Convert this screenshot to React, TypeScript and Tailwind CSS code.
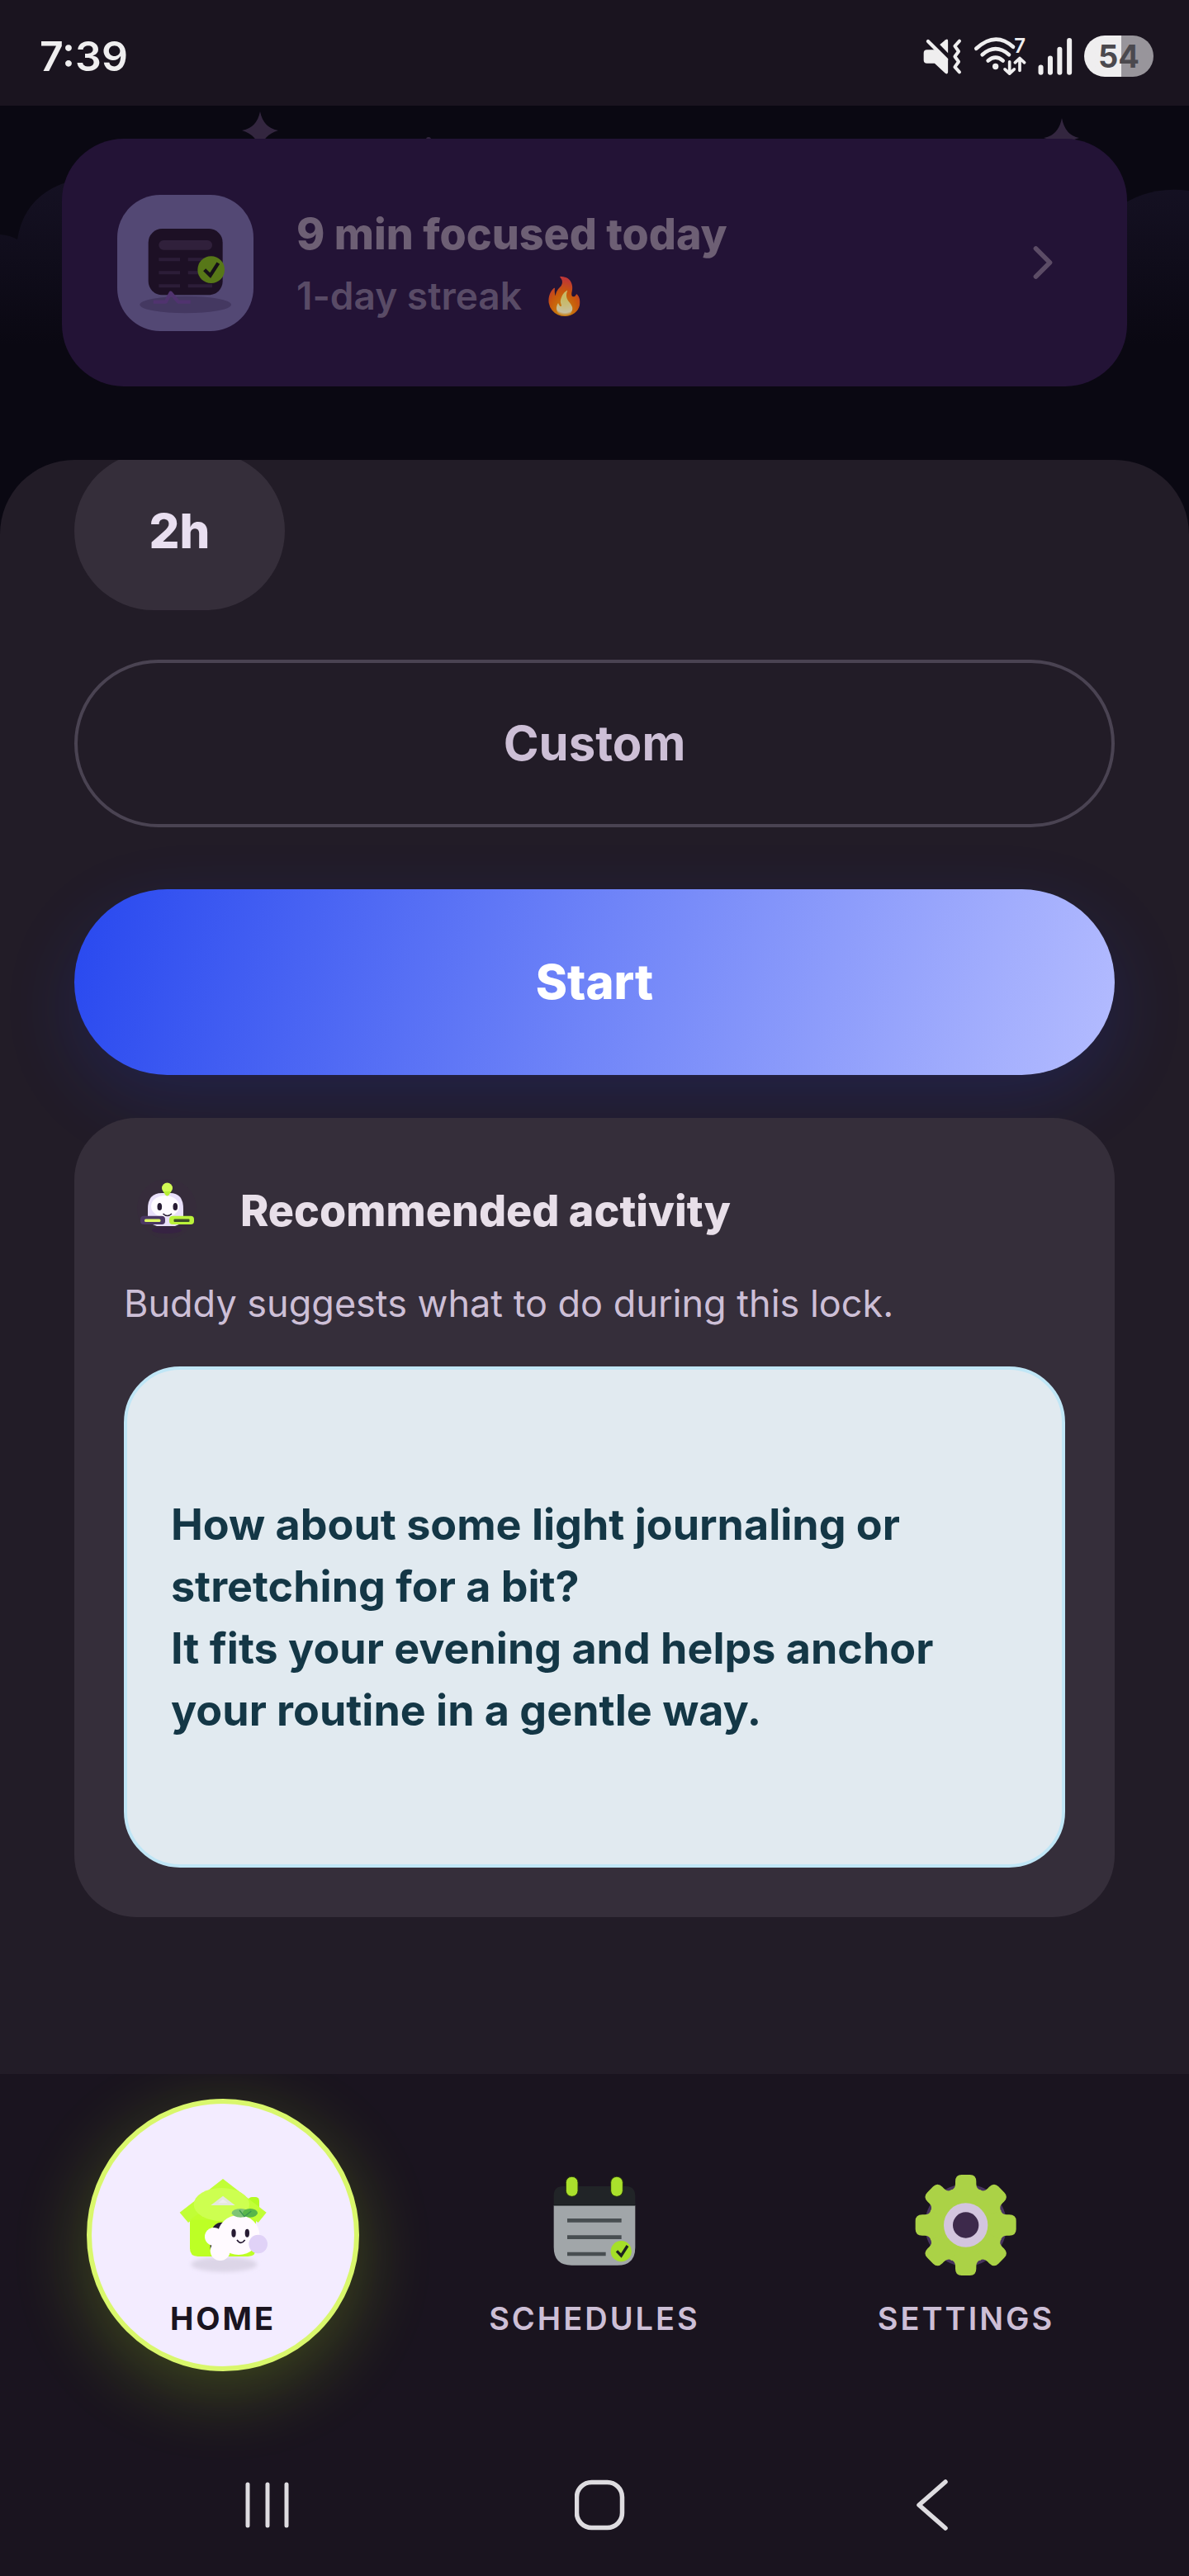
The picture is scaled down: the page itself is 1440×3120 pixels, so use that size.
import React from 'react';
import { ChevronRight } from 'lucide-react';

const MuteVibrateIcon = () => (
    <svg viewBox="28 45 142 140" className="w-[47px] h-[47px]" fill="#efeeef">
        <path d="M89 71 L110 54 Q119 48 119 58 V102 Z" />
        <path d="M42 90 H72 L119 124 V172 Q118 182 109 176 L70 140 H42 Q30 140 30 128 V102 Q30 90 42 90Z" />
        <path d="M46 59 L113 126" stroke="#efeeef" strokeWidth="13" strokeLinecap="round" />
        <path
            d="M161 58 L144 77 L158 96 L144 115 L158 134 L144 153 L161 172"
            fill="none"
            stroke="#efeeef"
            strokeWidth="12"
            strokeLinecap="round"
            strokeLinejoin="round"
        />
    </svg>
);

const WifiIcon = () => (
    <svg viewBox="208 45 192 140" className="w-16 h-[47px] overflow-visible" fill="none" stroke="#efeeef" strokeLinecap="round">
        <g strokeWidth="14">
            <path d="M218 86 Q288 22 352 80" />
            <path d="M240 108 Q288 66 337 108" />
            <path d="M261 130 Q288 107 315 130" />
        </g>
        <circle cx="288" cy="151" r="11" fill="#efeeef" stroke="none" />
        <text x="356" y="102" fill="#efeeef" stroke="#1a141f" strokeWidth="10" paintOrder="stroke" fontSize="72" fontWeight="600">7</text>
        <g strokeWidth="11" strokeLinejoin="round">
            <path d="M339 134 V175 M322 161 L339 177 L356 161" />
            <path d="M376 166 V123 M359 137 L376 121 L393 137" />
        </g>
    </svg>
);

const SignalIcon = () => (
    <svg viewBox="442 45 124 140" className="w-[42px] h-[47px]" stroke="#efeeef" strokeWidth="18" strokeLinecap="round">
        <path d="M452 154 V172 M486 121 V172 M520 89 V172 M555 57 V172" />
    </svg>
);

const ReportIcon = () => (
    <svg viewBox="67 47 495 495" className="size-[165px] shrink-0 rounded-[52px] bg-[#534874]">
        <ellipse cx="315" cy="446" rx="166" ry="31" fill="#443861" />
        <rect x="180" y="170" width="270" height="241" rx="50" fill="#1d1025" />
        <rect x="218" y="212" width="194" height="35" rx="17" fill="#30203b" />
        <path
            d="M218 282 H295 M324 282 H412 M218 330 H295 M324 330 H412 M218 378 H295 M324 378 H412"
            stroke="#2c1d38"
            strokeWidth="12"
        />
        <path d="M198 436 H243 L261 403 L289 436 H333" fill="none" stroke="#50336f" strokeWidth="13" strokeLinejoin="round" />
        <circle cx="408" cy="319" r="49" fill="#577718" />
        <path d="M384 319 L405 340 L434 295" fill="none" stroke="#161018" strokeWidth="13" />
    </svg>
);

const BuddyIcon = () => (
    <svg viewBox="0 0 105 105" className="size-[105px] shrink-0">
        <circle cx="52" cy="50" r="36" fill="#3a2840" opacity="0.35" />
        <ellipse cx="52" cy="76" rx="18" ry="4" fill="#362342" />
        <path d="M29 50 Q29 31 46 31 H56 Q72 31 72 50 V62 Q72 68 62 71 H40 Q29 68 29 60Z" fill="#e9e0fa" />
        <ellipse cx="50" cy="47" rx="17" ry="13" fill="#fefbff" />
        <circle cx="52.5" cy="25" r="6.5" fill="#d2fa55" />
        <path d="M48 29 Q52.5 40 57 29Z" fill="#b7ee35" />
        <ellipse cx="43.3" cy="47.5" rx="2.8" ry="4.6" fill="#271b33" />
        <ellipse cx="62.3" cy="47.5" rx="2.8" ry="4.6" fill="#271b33" />
        <path d="M47.5 56 Q52.5 61 58 56" fill="none" stroke="#271b33" strokeWidth="1.6" />
        <rect x="20" y="58.7" width="30" height="10.3" rx="4" fill="#4b3863" />
        <rect x="25" y="62.5" width="19.5" height="3.4" rx="1.5" fill="#dffa63" />
        <rect x="55" y="58.7" width="30" height="10.3" rx="4" fill="#baf23a" />
        <rect x="60.5" y="62.5" width="19" height="3.4" rx="1" fill="#3c4d2a" />
    </svg>
);

const HouseIcon = () => (
    <svg viewBox="390 426 360 372" className="w-[120px] h-[124px]">
        <defs>
            <filter id="soft" x="-20%" y="-50%" width="140%" height="200%">
                <feGaussianBlur stdDeviation="8" />
            </filter>
        </defs>
        <ellipse cx="574" cy="758" rx="120" ry="27" fill="#dcd5e7" filter="url(#soft)" />
        <rect x="662" y="513" width="40" height="70" rx="14" fill="#b4fb25" />
        <path d="M450 580 H690 V700 Q690 729 661 729 H479 Q450 729 450 700Z" fill="#bdff25" />
        <path d="M570 447 L728 569 L698 606 L570 510 L444 606 L413 569Z" fill="#c1fe36" />
        <path d="M450 596 L570 508 L690 596Z" fill="#c1fe2b" />
        <ellipse cx="565" cy="540" rx="101" ry="60" fill="#cdff50" />
        <path d="M570 509 L614 543 H526Z" fill="#e4e7dd" />
        <path d="M570 521 L588 535 H552Z" fill="#eeecee" />
        <circle cx="565" cy="640" r="35" fill="#271b33" />
        <rect x="524" y="650" width="76" height="75" rx="26" fill="#271b33" />
        <ellipse cx="627" cy="651" rx="76" ry="72" fill="#fffaff" />
        <circle cx="537" cy="657" r="33" fill="#fffaff" />
        <circle cx="560" cy="708" r="36" fill="#fffaff" />
        <circle cx="698" cy="684" r="34" fill="#e0d2f7" />
        <ellipse cx="634" cy="571" rx="32" ry="16" fill="#7fc475" />
        <ellipse cx="669" cy="571" rx="27" ry="16" fill="#58b74a" />
        <path d="M630 561 L648 584 L673 564" fill="none" stroke="#3a9450" strokeWidth="4" />
        <ellipse cx="609" cy="644" rx="8" ry="15" fill="#271b33" />
        <ellipse cx="658" cy="644" rx="8" ry="15" fill="#271b33" />
        <path d="M621 669 Q635 689 650 669" fill="none" stroke="#271b33" strokeWidth="5" />
    </svg>
);

const CalendarIcon = () => (
    <svg viewBox="300 126 360 372" className="w-[120px] h-[124px]">
        <path d="M332 243 V208 Q332 174 366 174 H594 Q628 174 628 208 V243Z" fill="#212427" />
        <path d="M332 243 H628 V396 Q628 461 563 461 H397 Q332 461 332 396Z" fill="#a1a6a9" />
        <path d="M332 243 H628" stroke="#111317" strokeWidth="3" />
        <rect x="376" y="139" width="44" height="72" rx="21" fill="#aae12c" stroke="#26340f" strokeWidth="3" />
        <rect x="539" y="139" width="44" height="72" rx="21" fill="#aae12c" stroke="#26340f" strokeWidth="3" />
        <path d="M381 298 H578 M381 359 H578 M381 420 H521" stroke="#484e51" strokeWidth="14" />
        <circle cx="577" cy="410" r="38" fill="#a5df28" />
        <path d="M561 409 L577 426 L600 390" fill="none" stroke="#1d2120" strokeWidth="10" />
    </svg>
);

const GEAR_TURNS = [0, 45, 90, 135, 180, 225, 270, 315];

const GearIcon = () => (
    <svg viewBox="210 126 360 372" className="w-[120px] h-[124px] overflow-visible">
        <g transform="translate(389 315)">
            <circle r="149" fill="#47345e" />
            <circle r="126" fill="#abd246" />
            {GEAR_TURNS.map(turn => (
                <path
                    key={turn}
                    transform={`rotate(${turn})`}
                    d="M0 0 L-55 -127 Q-38 -130 -38 -150 V-158 Q-38 -183 -15 -183 H15 Q38 -183 38 -158 V-150 Q38 -130 55 -127Z"
                    fill="#abd246"
                />
            ))}
            <circle r="80" fill="#d3c5de" />
            <circle r="47" fill="#3d294b" />
        </g>
    </svg>
);

// Night sky behind the streak card and the top corners of the sheet
const NightSky = () => (
    <svg viewBox="0 0 1440 520" preserveAspectRatio="none" className="absolute inset-x-0 top-0 w-full h-[520px]">
        <defs>
            <linearGradient id="cloud" x1="0" y1="90" x2="0" y2="290" gradientUnits="userSpaceOnUse">
                <stop offset="0" stopColor="#151123" />
                <stop offset="1" stopColor="#0a0812" />
            </linearGradient>
        </defs>
        <path d="M0 156 Q12 157 21 162 Q30 105 90 90 V290 H0Z" fill="url(#cloud)" />
        <path d="M1350 126 Q1390 96 1440 103 V290 H1350Z" fill="url(#cloud)" />
        <path d="M315 7 Q319 27 337 30 Q319 35 315 54 Q311 35 293 30 Q311 27 315 7Z" fill="#33263f" />
        <path d="M1286 15 Q1290 36 1307 39 Q1290 43 1286 60 Q1282 43 1264 39 Q1282 36 1286 15Z" fill="#33263f" />
        <circle cx="519" cy="41" r="3" fill="#33263f" />
    </svg>
);

const NAV_ITEMS = [
    { label: 'HOME', icon: HouseIcon, active: true },
    { label: 'SCHEDULES', icon: CalendarIcon, active: false },
    { label: 'SETTINGS', icon: GearIcon, active: false },
];

const StatusBar = () => (
    <header className="flex h-32 items-center justify-between bg-[#1a141f] pt-2 pl-12 pr-[43px]">
        <span className="text-[50px] leading-none font-semibold text-[#efeeef]">7:39</span>
        <div className="flex items-center gap-3.5">
            <MuteVibrateIcon />
            <WifiIcon />
            <SignalIcon />
            <span className="flex h-[50px] w-[84px] items-center justify-center rounded-full bg-linear-to-r from-[#efeeef] from-54% to-[#98959b] to-54% text-[38px] leading-none font-bold text-[#4b494e]">
                54
            </span>
        </div>
    </header>
);

const StreakCard = () => (
    <section className="relative px-[75px] pt-10 pb-[89px]">
        <NightSky />
        <button className="relative flex h-[300px] w-full items-center rounded-[75px] bg-[#231336] pl-[67px] pr-[68px] text-left">
            <ReportIcon />
            <span className="ml-[52px] flex flex-1 flex-col gap-1 pt-1">
                <span className="text-[52px] leading-[72px] font-extrabold text-[#6d5f74]">9 min focused today</span>
                <span className="flex items-center gap-6 text-[46px] leading-[68px] font-semibold text-[#594b66]">
                    1-day streak
                    <span className="text-[44px] opacity-75">🔥</span>
                </span>
            </span>
            <ChevronRight className="size-[68px] text-[#5c4c66]" strokeWidth={2} />
        </button>
    </section>
);

const Recommendation = () => (
    <section className="mt-[52px] rounded-[75px] bg-[#352e3a] p-[60px]">
        <div className="flex items-center gap-9">
            <BuddyIcon />
            <h2 className="text-[52px] leading-[72px] font-extrabold text-[#e8dfe9]">Recommended activity</h2>
        </div>
        <p className="mt-7 text-[45px] leading-[64px] text-[#cdbfd6]">Buddy suggests what to do during this lock.</p>
        <div className="mt-11 flex h-[607px] items-center rounded-[68px] border-4 border-[#c0e6f6] bg-[#e1eaf0] px-[53px]">
            <p className="text-[52px] leading-[75px] font-bold text-[#143746]">
                How about some light journaling or stretching for a bit?
                <br />
                It fits your evening and helps anchor your routine in a gentle way.
            </p>
        </div>
    </section>
);

const BottomNav = () => (
    <nav className="grid grid-cols-3 justify-items-center bg-[#1a141f] px-[45px] pt-[30px] pb-[76px]">
        {NAV_ITEMS.map(item => (
            <a
                key={item.label}
                href="#"
                className={`flex size-[330px] flex-col items-center gap-7 rounded-full border-[6px] pt-[84px] text-[38px] leading-[48px] tracking-[3px] ${item.active
                    ? 'border-[#d9f76c] bg-[#f3ecff] font-bold text-[#1a141f] shadow-[0_22px_90px_rgba(190,255,20,0.24)]'
                    : 'border-transparent font-semibold text-[#cdbfd6]'
                    }`}
            >
                <item.icon />
                {item.label}
            </a>
        ))}
    </nav>
);

const SystemBar = () => (
    <div className="flex h-[172px] items-center justify-between pl-[293px] pr-[287px]">
        <button aria-label="Recents">
            <svg viewBox="0 0 60 60" className="size-[60px]" stroke="#dedce0" strokeWidth="5" strokeLinecap="round">
                <path d="M7 5 V55 M31 5 V55 M54 5 V55" />
            </svg>
        </button>
        <button aria-label="Home">
            <svg viewBox="0 0 64 64" className="size-16">
                <rect x="2.5" y="4.5" width="55" height="55" rx="18" fill="none" stroke="#dedce0" strokeWidth="5.5" />
            </svg>
        </button>
        <button aria-label="Back">
            <svg viewBox="0 0 50 64" className="h-16 w-[50px]" fill="none" stroke="#dedce0" strokeWidth="5.5" strokeLinecap="round" strokeLinejoin="round">
                <path d="M42 4 L10 32 L42 60" />
            </svg>
        </button>
    </div>
);

const App: React.FC = () => {
    return (
        <div className="flex min-h-screen flex-col bg-[#1a141f] font-['Inter',sans-serif]">
            <StatusBar />
            <div className="flex flex-1 flex-col bg-[#0a0812]">
                <StreakCard />
                <main className="relative flex-1 overflow-hidden rounded-t-[90px] bg-[#221c27] px-[90px] pb-[190px]">
                    {/* Last duration chip, partly scrolled under the sheet's edge */}
                    <button className="-mt-2.5 block h-48 w-[255px] rounded-full bg-[#352e3a] text-[58px] font-extrabold text-[#e9dff0]">
                        2h
                    </button>
                    <button className="mt-[60px] block h-[203px] w-full rounded-full border-4 border-[#4a4352] text-[58px] font-bold text-[#cdbfd6]">
                        Custom
                    </button>
                    <button className="mt-[75px] block h-[225px] w-full rounded-full bg-linear-[105deg,#2848ef,#6f84f8_50%,#b4bcff] text-[58px] font-extrabold text-white shadow-[0_30px_90px_rgba(40,70,255,0.16)]">
                        Start
                    </button>
                    <Recommendation />
                </main>
            </div>
            <BottomNav />
            <SystemBar />
        </div>
    );
};

export default App;
